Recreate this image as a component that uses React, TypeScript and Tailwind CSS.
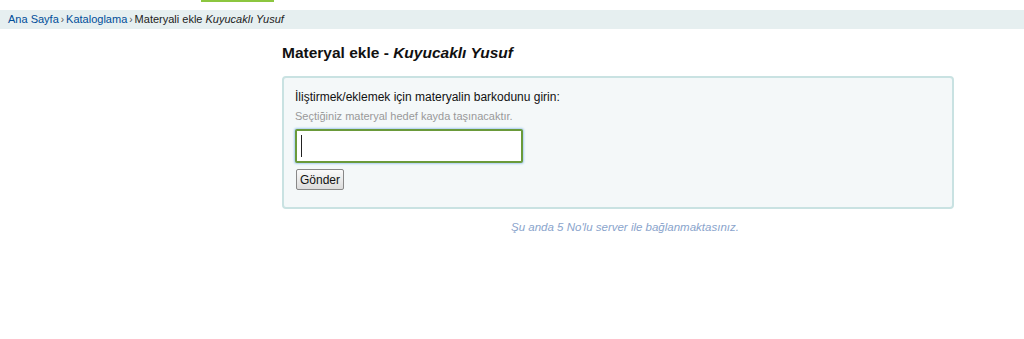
export default function App() {
  return (
    <div className="w-[1024px] h-[339px] bg-white" style={{ fontFamily: '"Liberation Sans", Arial, sans-serif' }}>
      <div className="flex h-[10px]">
        <div className="ml-[201px] w-[73px] h-[2px] bg-[#8cc63f]" />
      </div>
      <div className="h-[19px] bg-[#e6eff0] flex items-center pl-[8px] text-[11px] text-[#222]">
        <a className="text-[#004d99]">Ana Sayfa</a>
        <span className="mx-[2px] text-[#555] text-[10px]">›</span>
        <a className="text-[#004d99]">Kataloglama</a>
        <span className="mx-[2px] text-[#555] text-[10px]">›</span>
        <span>Materyali ekle <i>Kuyucaklı Yusuf</i></span>
      </div>
      <div className="pl-[282px] w-[956px]">
        <h1 className="mt-[15px] text-[15.5px] leading-[18px] font-bold text-[#111]">
          Materyal ekle - <i>Kuyucaklı Yusuf</i>
        </h1>
        <div className="mt-[14px] w-[672px] h-[133px] border-2 border-[#c9e2e2] rounded-[4px] bg-[#f4f8f9] px-[11px] pt-[12px]">
          <div className="text-[12px] leading-[15px] text-[#111]">İliştirmek/eklemek için materyalin barkodunu girin:</div>
          <div className="mt-[4px] text-[11px] leading-[14px] text-[#999]">Seçtiğiniz materyal hedef kayda taşınacaktır.</div>
          <div className="mt-[6px] w-[228px] h-[34px] border-2 border-[#6a9a3a] rounded-[2px] bg-white shadow-[0_0_2px_1px_#a9cdf0] flex items-center pl-[4px]">
            <div className="w-[1px] h-[22px] bg-[#222]" />
          </div>
          <button className="block mt-[6px] ml-[1px] h-[21px] px-[3px] text-[12px] text-[#111] border border-[#888] rounded-[2px] bg-gradient-to-b from-[#fafafa] to-[#dcdcdc]">
            Gönder
          </button>
        </div>
        <div className="mt-[11px] w-[686px] text-center text-[11.5px] leading-[14px] italic text-[#8aa4cc]">
          Şu anda 5 No'lu server ile bağlanmaktasınız.
        </div>
      </div>
    </div>
  );
}
